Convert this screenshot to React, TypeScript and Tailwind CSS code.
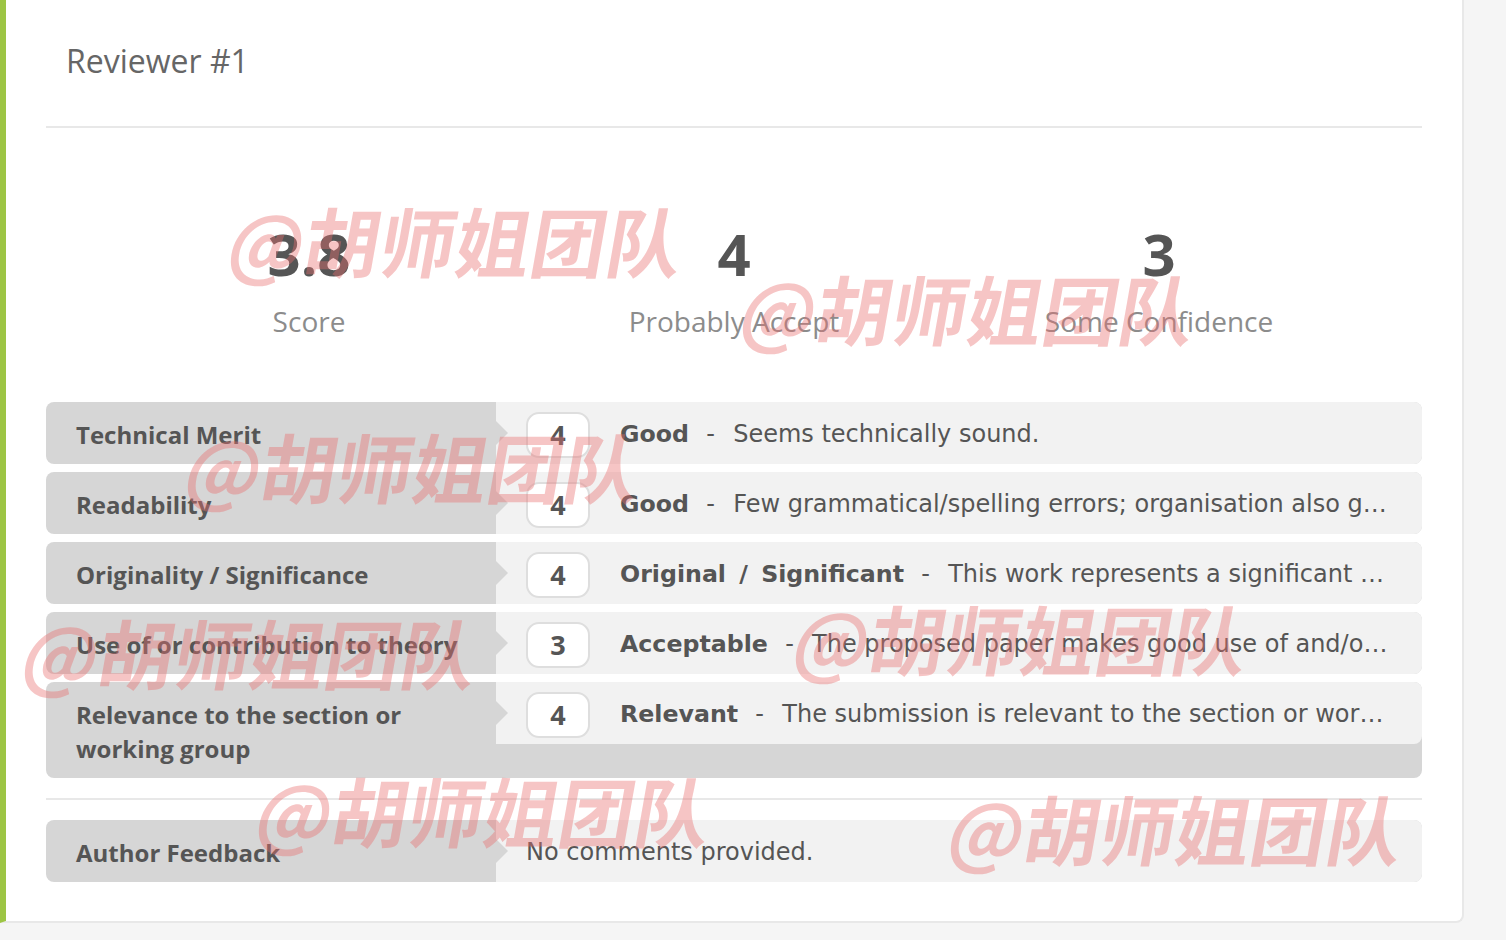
import React from "react";

const OS = "font-['Open_Sans','Noto_Sans',sans-serif]";
const DV = "font-['DejaVu_Sans',sans-serif]";

type Row = { label: React.ReactNode; n?: string; title?: string; desc: string; tall?: boolean };

const rows: Row[] = [
  { label: "Technical Merit", n: "4", title: "Good", desc: "Seems technically sound." },
  { label: "Readability", n: "4", title: "Good", desc: "Few grammatical/spelling errors; organisation also generally good and clear throughout." },
  { label: "Originality / Significance", n: "4", title: "Original / Significant", desc: "This work represents a significant contribution to the field of study." },
  { label: "Use of or contribution to theory", n: "3", title: "Acceptable", desc: "The proposed paper makes good use of and/or contributes to theory in the field." },
  { label: "Relevance to the section or working group", n: "4", title: "Relevant", desc: "The submission is relevant to the section or working group to which it was submitted.", tall: true },
];

function ReviewRow({ label, n, title, desc, tall }: Row) {
  return (
    <div className={`flex items-start rounded-lg bg-[#d6d6d6] ${tall ? "h-[96px]" : "h-[62px]"}`}>
      <div className={`w-[450px] shrink-0 pl-[30px] pr-[20px] pt-[16px] text-[24px] leading-[34px] font-bold text-[#555] ${OS}`}>
        {label}
      </div>
      <div className="relative flex h-[62px] min-w-0 flex-1 items-center rounded-r-lg bg-[#f2f2f2] pl-[30px] pr-[30px]">
        <div className="absolute left-0 top-1/2 h-0 w-0 -translate-y-1/2 border-y-[12px] border-l-[12px] border-y-transparent border-l-[#d6d6d6]" />
        {n ? (
          <div className={`mr-[30px] mt-[4px] flex h-[46px] w-[64px] shrink-0 items-center justify-center rounded-[13px] border-2 border-[#dedede] bg-white text-[27px] font-bold text-[#555] ${OS}`}>
            {n}
          </div>
        ) : null}
        <div className={`mt-[1px] min-w-0 flex-1 truncate text-[24px] leading-[34px] text-[#555] ${DV}`}>
          {title ? <b className="text-[23.7px] [word-spacing:5px]">{title}</b> : null}
          {title ? <span className="ml-[2px] mr-[3px] whitespace-pre">{"  -  "}</span> : null}
          {desc}
        </div>
      </div>
    </div>
  );
}

function Stat({ value, label }: { value: string; label: string }) {
  return (
    <div className={`flex w-[425px] flex-col items-center ${OS}`}>
      <div className="text-[58px] leading-[70px] font-bold text-[#555]">{value}</div>
      <div className="mt-[13px] text-[28px] leading-[38px] text-[#8c8c8c]">{label}</div>
    </div>
  );
}

function Mark({ className }: { className: string }) {
  return (
    <div
      className={`pointer-events-none absolute -skew-x-[10deg] whitespace-nowrap text-[75.5px] leading-[90px] font-bold text-[rgba(232,110,110,0.4)] font-['Noto_Sans_CJK_SC',sans-serif] ${className}`}
    >
      @胡师姐团队
    </div>
  );
}

export default function App() {
  return (
    <div className="relative h-[940px] w-full overflow-hidden bg-[#f5f5f5]">
      <div className="flex h-[923px] w-[1464px] flex-col rounded-br-lg border-r-2 border-b-2 border-l-[6px] border-r-[#e8e8e8] border-b-[#e8e8e8] border-l-[#9dc544] bg-white pl-[40px] pr-[40px]">
        <div className={`border-b-2 border-[#e8e8e8] pl-[20px] pt-[38px] pb-[43px] text-[32px] leading-[45px] text-[#666] ${OS}`}>
          Reviewer #1
        </div>
        <div className="mt-[91px] flex justify-center">
          <Stat value="3.8" label="Score" />
          <Stat value="4" label="Probably Accept" />
          <Stat value="3" label="Some Confidence" />
        </div>
        <div className="mt-[62px] flex flex-col gap-[8px]">
          {rows.map((r, i) => (
            <ReviewRow key={i} {...r} />
          ))}
        </div>
        <div className="mt-[20px] mb-[20px] border-t-2 border-[#e8e8e8]" />
        <ReviewRow label="Author Feedback" desc="No comments provided." />
      </div>
      <Mark className="left-[230px] top-[194px]" />
      <Mark className="left-[742px] top-[262px]" />
      <Mark className="left-[187px] top-[420px]" />
      <Mark className="left-[24px] top-[606px]" />
      <Mark className="left-[795px] top-[592px]" />
      <Mark className="left-[258px] top-[764px]" />
      <Mark className="left-[950px] top-[782px]" />
    </div>
  );
}
